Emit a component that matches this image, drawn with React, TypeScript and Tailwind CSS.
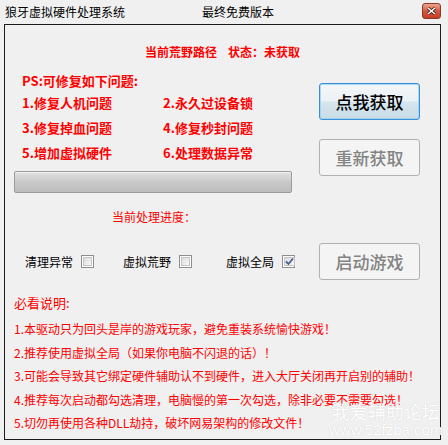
import React from 'react';

const cjk = { fontFamily: '"Noto Sans CJK SC", "Liberation Sans", sans-serif' };

const fixes = [
  ['1.修复人机问题', '2.永久过设备锁'],
  ['3.修复掉血问题', '4.修复秒封问题'],
  ['5.增加虚拟硬件', '6.处理数据异常'],
];

const notes = [
  '1.本驱动只为回头是岸的游戏玩家，避免重装系统愉快游戏！',
  '2.推荐使用虚拟全局（如果你电脑不闪退的话）！',
  '3.可能会导致其它绑定硬件辅助认不到硬件，进入大厅关闭再开启别的辅助！',
  '4.推荐每次启动都勾选清理，电脑慢的第一次勾选，除非必要不需要勾选！',
  '5.切勿再使用各种DLL劫持，破坏网易架构的修改文件！',
];

// Win7 style checkbox
const CheckBox: React.FC<{ checked?: boolean }> = ({ checked }) => (
  <span className="w-[13px] h-[13px] border border-[#8f8f8f] bg-white p-[1px] flex">
    <span className="flex-1 bg-gradient-to-br from-[#dcdcdc] to-[#f8f8f8] border border-[#c4c4c4] flex items-center justify-center">
      {checked && (
        <svg width="9" height="9" viewBox="0 0 9 9">
          <path d="M1 4.5 L3.5 7 L8 1.5" stroke="#4a5f97" strokeWidth="1.8" fill="none" />
        </svg>
      )}
    </span>
  </span>
);

const DisabledButton: React.FC<{ label: string }> = ({ label }) => (
  <div className="w-[101px] h-[37px] rounded-[3px] border border-[#adb2b5] bg-[#f4f4f4] flex items-center justify-center text-[17px] text-[#838383] font-medium">
    {label}
  </div>
);

export default function App() {
  return (
    <div className="relative w-[448px] h-[445px] bg-[#f0f0f0] overflow-hidden text-black" style={cjk}>
      {/* title bar */}
      <div className="h-[24px] flex items-center text-[12px] leading-none">
        <span className="ml-[5px] w-[197px]">狼牙虚拟硬件处理系统</span>
        <span>最终免费版本</span>
        <div className="ml-auto mr-[7px] mb-[2px] w-[19px] h-[16px] rounded-[3px] border border-[#8a3a2c] bg-gradient-to-b from-[#e9a792] via-[#d9553d] to-[#c63d25] flex items-center justify-center">
          <svg width="9" height="8" viewBox="0 0 9 8">
            <path d="M1 1 L8 7 M8 1 L1 7" stroke="#3a1a14" strokeWidth="3" />
            <path d="M1 1 L8 7 M8 1 L1 7" stroke="#ffffff" strokeWidth="1.6" />
          </svg>
        </div>
      </div>

      {/* main panel */}
      <div className="ml-[4px] w-[437px] h-[416px] border border-[#1c1c1c] flex flex-col">
        <div className="pt-[19px] h-[35px] text-center text-[12px] leading-[16px] font-bold text-[#ff0000] whitespace-pre">
          {'当前荒野路径    状态：未获取'}
        </div>

        <div className="flex">
          <div className="ml-[9px] w-[278px] flex flex-col">
            <div className="mt-[12px] pl-[8px] text-[13px] leading-[18px] font-bold text-[#ff0000]">PS:可修复如下问题:</div>
            {fixes.map(([a, b]) => (
              <div key={a} className="pl-[8px] grid grid-cols-[141px_1fr] text-[13px] leading-[25px] font-bold text-[#ff0000]">
                <span>{a}</span>
                <span>{b}</span>
              </div>
            ))}
            <div className="mt-[6px] h-[22px] rounded-[2px] border border-[#9b9b9b] bg-gradient-to-b from-[#e2e2e2] via-[#c9c9c9] to-[#bdbdbd] shadow-[inset_0_1px_0_#f2f2f2]" />
          </div>

          <div className="ml-[27px] flex flex-col">
            <div className="mt-[23px] w-[101px] h-[37px] rounded-[3px] border border-[#3c8ed4] shadow-[inset_0_0_0_1px_rgba(150,210,245,0.8)] bg-[linear-gradient(#f4f7f9_0%,#ebf1f5_48%,#d6e5ee_52%,#c9dce6_100%)] flex items-center justify-center text-[17px] font-medium">
              点我获取
            </div>
            <div className="mt-[19px]">
              <DisabledButton label="重新获取" />
            </div>
          </div>
        </div>

        <div className="mt-[16px] ml-[107px] text-[12px] leading-[16px] text-[#ff0000]">当前处理进度：</div>

        <div className="mt-[18px] flex items-center text-[12px] leading-none">
          <span className="ml-[20px] w-[48px]">清理异常</span>
          <span className="ml-[8px]"><CheckBox /></span>
          <span className="ml-[29px] w-[48px]">虚拟荒野</span>
          <span className="ml-[8px]"><CheckBox /></span>
          <span className="ml-[34px] w-[48px]">虚拟全局</span>
          <span className="ml-[8px]"><CheckBox checked /></span>
          <span className="ml-[24px]"><DisabledButton label="启动游戏" /></span>
        </div>

        <div className="mt-[14px] ml-[9px] text-[13px] leading-[18px] text-[#ff0000]">必看说明:</div>
        <div className="mt-[5px] ml-[9px] flex flex-col text-[12px] leading-[23.5px] text-[#ff0000] whitespace-nowrap">
          {notes.map((n) => (
            <span key={n}>{n}</span>
          ))}
        </div>
      </div>

      {/* watermark */}
      <div className="absolute left-[329px] top-[400px] flex flex-col items-center text-white [text-shadow:0_0_1px_#c8c8c8]">
        <span className="text-[18px] leading-[22px]">我爱辅助论坛</span>
        <span className="text-[15px] leading-[16px]" style={{ fontFamily: '"Liberation Sans", sans-serif' }}>www.52fzba.com</span>
      </div>
    </div>
  );
}
